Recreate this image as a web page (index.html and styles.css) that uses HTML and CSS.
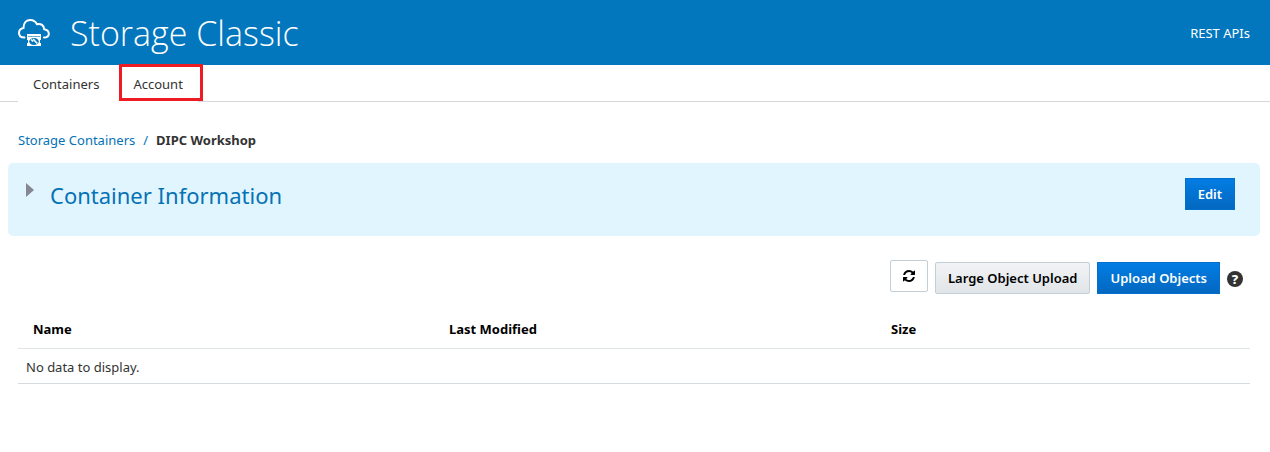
FILE: index.html
```html
<!DOCTYPE html>
<html lang="en">
<head>
<meta charset="utf-8">
<title>Storage Classic</title>
<link rel="stylesheet" href="styles.css">
</head>
<body>
<header class="banner">
  <svg class="logo" viewBox="0 0 34 30" aria-hidden="true">
    <path d="M7.500 19.500C4 19.500 2 17.500 2 15C2 12.300 3.800 10.400 6.500 10C6.500 5 9.200 2 13.200 2C16.300 2 18.600 3.500 20 6.200C24 5.200 27 7.500 27.200 11.200C30 11.600 31.800 13.300 31.800 15.700C31.800 18.100 30 19.500 27 19.500" fill="none" stroke="#fff" stroke-width="2" stroke-linecap="round"/>
    <path d="M10 16h14v2h-14zM10 18h14v10h-14z" fill="#fff"/>
    <path d="M11 18.500h12" stroke="#0277bd" stroke-opacity=".6"/>
    <ellipse cx="17" cy="23.500" rx="4.800" ry="3.500" fill="#0277bd"/>
    <path d="M14 21.500l2.200 2M16.200 21l3 3.500M18.500 23.500l1.800 2" stroke="#fff" stroke-width="1.500"/>
    <path d="M10.500 22v3M23.500 22v3" stroke="#0277bd"/>
  </svg>
  <h1 class="banner-title">Storage Classic</h1>
  <a class="banner-link" href="#">REST APIs</a>
</header>
<nav class="tabs">
  <div class="tab-list">
    <a class="tab" href="#">Containers</a>
    <a class="tab tab-marked" href="#">Account</a>
  </div>
</nav>
<main class="content">
  <nav class="crumbs" aria-label="Breadcrumb">
    <a class="crumb-link" href="#">Storage Containers</a>
    <span class="crumb-sep">/</span>
    <span class="crumb-current">DIPC Workshop</span>
  </nav>
  <section class="panel">
    <button class="disclosure" type="button" aria-label="Expand Container Information" aria-expanded="false"></button>
    <h2 class="panel-title">Container Information</h2>
    <button class="btn btn-primary" type="button">Edit</button>
  </section>
  <div class="toolbar">
    <button class="btn btn-icon" type="button" aria-label="Refresh">
      <svg class="refresh" viewBox="0 0 1536 1536" aria-hidden="true">
        <path d="M1511 928q0 5-1 7-64 268-268 434.500T764 1536q-146 0-282.500-55T238 1324l-129 129q-19 19-45 19t-45-19-19-45V960q0-26 19-45t45-19h448q26 0 45 19t19 45-19 45l-137 137q71 66 161 102t187 36q134 0 250-65t186-179q11-17 53-117 8-23 30-23h192q13 0 22.500 9.500t9.500 22.500zm25-800v448q0 26-19 45t-45 19h-448q-26 0-45-19t-19-45 19-45l138-138Q969 256 768 256q-134 0-250 65T332 500q-11 17-53 117-8 23-30 23H50q-13 0-22.500-9.500T18 608v-7q65-268 270-434.500T768 0q146 0 284 55.500T1297 212l130-129q19-19 45-19t45 19 19 45z"/>
      </svg>
    </button>
    <button class="btn btn-plain" type="button">Large Object Upload</button>
    <button class="btn btn-primary" type="button">Upload Objects</button>
    <button class="help" type="button" aria-label="Help">?</button>
  </div>
  <table class="objects">
    <colgroup><col class="col-name"><col class="col-modified"><col></colgroup>
    <thead><tr><th scope="col">Name</th><th scope="col">Last Modified</th><th scope="col">Size</th></tr></thead>
    <tbody><tr><td colspan="3">No data to display.</td></tr></tbody>
  </table>
</main>
</body>
</html>
```
FILE: styles.css
```css
*, *::after { box-sizing: border-box; }
body { margin: 0; background: #fff; color: #333; font: 13px/20px "Noto Sans", "Open Sans", sans-serif; }
a { text-decoration: none; }
button { font: inherit; cursor: pointer; }
.banner { display: flex; align-items: center; height: 65px; padding: 0 20px 0 17px; background: #0277bd; color: #fff; }
.logo { width: 34px; height: 30px; flex: none; }
.banner-title { margin: 0 auto 0 19px; font-family: "Open Sans", "Noto Sans", sans-serif; font-size: 34px; line-height: 48px; font-weight: 300; }
.banner-link { color: #fff; }
.tabs { height: 37px; border-bottom: 1px solid #d6d7d8; padding-left: 18px; }
.tab-list { display: flex; width: 180px; height: 37px; background: #fff; }
.tab { position: relative; padding: 9px 0 8px 15px; color: #333; }
.tab-marked { padding-left: 34px; }
.tab-marked::after { content: ""; position: absolute; top: -1px; left: 20px; width: 84px; height: 37px; border: 3px solid #ed1c24; }
.content { padding: 28px 10px 0 8px; }
.crumbs { display: flex; gap: 8px; padding-left: 10px; }
.crumb-link, .crumb-sep { color: #0572b5; }
.crumb-current { font-weight: 700; }
.panel { display: flex; align-items: flex-start; min-height: 73px; margin-top: 13px; padding: 15px 25px 0 18px; background: #e1f5fe; border-radius: 5px; }
.disclosure { width: 8px; height: 14px; margin: 5px 16px 0 0; padding: 0; border: 0; background: #878791; clip-path: polygon(0 0, 100% 50%, 0 100%); }
.panel-title { margin: 0 auto 0 0; color: #0572b5; font-size: 22px; line-height: 34px; font-weight: 400; }
.btn { height: 32px; padding: 0 12px; border: 1px solid; border-radius: 2px; font-weight: 600; white-space: nowrap; }
.btn-primary { background: linear-gradient(#027de4, #0368c0); border-color: #0370ce; border-radius: 0; color: #fff; }
.btn-plain { background: linear-gradient(#f2f3f5, #e1e5e8); border-color: #c4ced7; color: #000; }
.btn-icon { display: flex; align-items: center; justify-content: center; width: 38px; padding: 0; margin-bottom: 2px; background: #fff; border-color: #c4ced7; color: #000; }
.refresh { width: 12px; height: 12px; fill: #000; }
.toolbar { display: flex; align-items: flex-end; justify-content: flex-end; gap: 7px; margin-top: 24px; padding-right: 17px; }
.help { width: 16px; height: 16px; margin-bottom: 7px; padding: 0; border: 0; border-radius: 50%; background: #333; color: #fff; font-size: 13px; line-height: 16px; font-weight: 800; }
.objects { width: calc(100% - 20px); margin: 15px 10px 0; border-collapse: collapse; table-layout: fixed; }
.col-name { width: 416px; }
.col-modified { width: 442px; }
.objects th { padding: 10px 15px 9px; border-bottom: 1px solid #dfe4e7; color: #000; font-weight: 700; text-align: left; }
.objects td { padding: 8px 8px 6px; border-bottom: 1px solid #d6dbe0; }
```
